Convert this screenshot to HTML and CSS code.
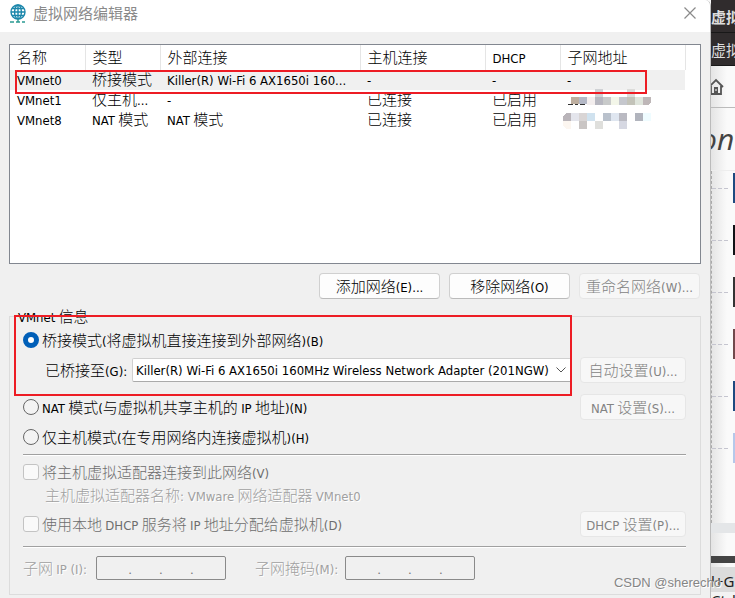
FILE: index.html
```html
<!DOCTYPE html>
<html lang="zh-CN">
<head>
    <meta charset="UTF-8">
    <meta name="viewport" content="width=device-width, initial-scale=1.0">
    <title>虚拟网络编辑器</title>
    <link rel="stylesheet" href="styles.css">
</head>
<body>

    <div class="desktop">
        <main class="dialog">
            <!-- Title bar -->
            <header class="titlebar">
                <svg class="app-icon" viewBox="0 0 18 19" width="18" height="19">
                    <g fill="none" stroke="#1b86ab" stroke-width="1.4">
                        <circle cx="9" cy="8" r="7"/>
                        <ellipse cx="9" cy="8" rx="3.4" ry="7"/>
                        <path d="M9 1v14M2 8h14M3.2 4.5h11.6M3.2 11.5h11.6"/>
                        <path d="M1 18h4M7 18h4M13 18h3" stroke="#2b9a92" stroke-width="1.6"/>
                        <path d="M9 15v3" stroke="#2b9a92"/>
                    </g>
                </svg>
                <h1>虚拟网络编辑器</h1>
                <button class="close" type="button" aria-label="关闭">
                    <svg viewBox="0 0 12 12" width="12" height="12"><path d="M0.5 0.5L11.5 11.5M11.5 0.5L0.5 11.5" stroke="#8a8a8a" stroke-width="1.2"/></svg>
                </button>
            </header>

            <div class="content">
                <!-- Network list -->
                <div class="list">
                    <table>
                        <colgroup>
                            <col class="c-name"><col class="c-type"><col class="c-ext"><col class="c-host"><col class="c-dhcp"><col class="c-addr"><col>
                        </colgroup>
                        <thead>
                            <tr><th>名称</th><th>类型</th><th>外部连接</th><th>主机连接</th><th><span class="lat">DHCP</span></th><th>子网地址</th><td></td></tr>
                        </thead>
                        <tbody>
                            <tr class="selected">
                                <td><span class="lat">VMnet0</span></td>
                                <td>桥接模式</td>
                                <td><span class="lat">Killer(R) Wi-Fi 6 AX1650i 160...</span></td>
                                <td><span class="lat">-</span></td>
                                <td><span class="lat">-</span></td>
                                <td><span class="lat">-</span></td>
                                <td></td>
                            </tr>
                            <tr>
                                <td><span class="lat">VMnet1</span></td>
                                <td>仅主机<span class="lat">...</span></td>
                                <td><span class="lat">-</span></td>
                                <td>已连接</td>
                                <td>已启用</td>
                                <td class="hidden-addr">
                                    <svg class="mosaic" viewBox="0 0 88 40" width="88" height="40" shape-rendering="crispEdges">
                                        <path fill="#333" d="M5 15h5v1H5zM12 15h3v1h-3zM17 15h5v1h-5z"/>
                                        <path fill="#d0d2d5" d="M32 0h8v8h-8z"/><path fill="#dcdcda" d="M64 0h8v8h-8z"/>
                                        <path fill="#bdae9f" d="M8 8h8v7H8z"/><path fill="#b4b8c6" d="M16 8h8v7h-8z"/>
                                        <path fill="#f3eeee" d="M24 8h8v8h-8z"/><path fill="#b7b7c0" d="M32 8h8v8h-8z"/>
                                        <path fill="#c8caca" d="M40 8h8v8h-8z"/><path fill="#f3f6e9" d="M48 8h8v8h-8z"/>
                                        <path fill="#c5c7cd" d="M56 8h8v8h-8z"/><path fill="#c3c3b9" d="M64 8h8v8h-8z"/>
                                        <path fill="#dfe5dc" d="M72 8h8v8h-8z"/><path fill="#beb7b8" d="M80 8h8v5l-3 3h-5z"/>
                                        <path fill="#b9b4b9" d="M0 27l3-3h5v8H0z"/><path fill="#e4e5ec" d="M8 24h8v8H8z"/>
                                        <path fill="#d9d5d5" d="M16 24h8v8h-8z"/><path fill="#d0e2ef" d="M24 24h8v8h-8z"/>
                                        <path fill="#b9c1cc" d="M40 24h8v8h-8z"/><path fill="#dfe6f0" d="M48 24h8v8h-8z"/>
                                        <path fill="#babac2" d="M56 24h8v8h-8z"/><path fill="#b1b4bd" d="M72 24h8v8h-8z"/>
                                        <path fill="#effcff" d="M80 24h8v8h-8z"/><path fill="#fcf6f0" d="M0 32h8v8H3l-3-3z"/>
                                        <path fill="#c9c5c4" d="M16 32h8v8h-8z"/><path fill="#dfdfdc" d="M32 32h8v8h-8z"/>
                                        <path fill="#d6d8e2" d="M56 32h8v8h-8z"/>
                                    </svg>
                                </td>
                                <td></td>
                            </tr>
                            <tr>
                                <td><span class="lat">VMnet8</span></td>
                                <td><span class="lat">NAT</span> 模式</td>
                                <td><span class="lat">NAT</span> 模式</td>
                                <td>已连接</td>
                                <td>已启用</td>
                                <td></td>
                                <td></td>
                            </tr>
                        </tbody>
                    </table>
                    <div class="mark mark-row"></div>
                </div>

                <div class="actions">
                    <button type="button" class="btn">添加网络<span class="lat">(E)...</span></button>
                    <button type="button" class="btn">移除网络<span class="lat">(O)</span></button>
                    <button type="button" class="btn" disabled>重命名网络<span class="lat">(W)...</span></button>
                </div>

                <!-- VMnet info -->
                <div class="info-wrap">
                    <fieldset class="info">
                        <legend><span class="lat">VMnet</span> 信息</legend>
                        <div class="row">
                            <input type="radio" name="mode" id="bridged" checked>
                            <label for="bridged">桥接模式<span class="lat">(</span>将虚拟机直接连接到外部网络<span class="lat">)(B)</span></label>
                        </div>
                        <div class="row">
                            <label for="adapter" class="adapter-label">已桥接至<span class="lat">(G):</span></label>
                            <div class="select-wrap">
                                <select id="adapter" class="lat">
                                    <option>Killer(R) Wi-Fi 6 AX1650i 160MHz Wireless Network Adapter (201NGW)</option>
                                </select>
                                <svg class="chevron" viewBox="0 0 10 6" width="10" height="6"><path d="M0.5 0.5L5 5L9.5 0.5" fill="none" stroke="#555"/></svg>
                            </div>
                            <button type="button" class="btn side" disabled>自动设置<span class="lat">(U)...</span></button>
                        </div>
                        <div class="row nat">
                            <input type="radio" name="mode" id="nat">
                            <label for="nat"><span class="lat">NAT</span> 模式<span class="lat">(</span>与虚拟机共享主机的 <span class="lat">IP</span> 地址<span class="lat">)(N)</span></label>
                            <button type="button" class="btn side" disabled><span class="lat">NAT</span> 设置<span class="lat">(S)...</span></button>
                        </div>
                        <div class="row">
                            <input type="radio" name="mode" id="hostonly">
                            <label for="hostonly">仅主机模式<span class="lat">(</span>在专用网络内连接虚拟机<span class="lat">)(H)</span></label>
                        </div>
                        <hr>
                        <div class="row off">
                            <input type="checkbox" id="hostadapter" disabled>
                            <label for="hostadapter">将主机虚拟适配器连接到此网络<span class="lat">(V)</span></label>
                        </div>
                        <p class="adapter-name">主机虚拟适配器名称<span class="lat">: VMware</span> 网络适配器 <span class="lat">VMnet0</span></p>
                        <div class="row off">
                            <input type="checkbox" id="dhcp" disabled>
                            <label for="dhcp">使用本地 <span class="lat">DHCP</span> 服务将 <span class="lat">IP</span> 地址分配给虚拟机<span class="lat">(D)</span></label>
                            <button type="button" class="btn side" disabled><span class="lat">DHCP</span> 设置<span class="lat">(P)...</span></button>
                        </div>
                        <hr class="second">
                        <div class="row ips">
                            <label for="ip1">子网 <span class="lat">IP (I):</span></label>
                            <div class="ip">
                                <input id="ip1" disabled>.<input aria-label="IP 2" disabled>.<input aria-label="IP 3" disabled>.<input aria-label="IP 4" disabled>
                            </div>
                            <label for="mask1" class="mask-label">子网掩码<span class="lat">(M):</span></label>
                            <div class="ip">
                                <input id="mask1" disabled>.<input aria-label="掩码 2" disabled>.<input aria-label="掩码 3" disabled>.<input aria-label="掩码 4" disabled>
                            </div>
                        </div>
                    </fieldset>
                    <div class="mark mark-bridge"></div>
                </div>
            </div>
        </main>

        <!-- Page behind the dialog -->
        <aside class="behind">
            <div class="tab strong">虚拟</div>
            <div class="tab">虚拟机</div>
            <div class="toolbar">
                <svg viewBox="0 0 16 17" width="16" height="17"><path d="M1 9L8 2l7 7M3 8v8h10V8" fill="none" stroke="#555" stroke-width="1.8"/><path d="M6 9h4v7H6z" fill="#555"/><path d="M7.500 11h1v2h-1z" fill="#fff"/></svg>
            </div>
            <div class="logo">on</div>
            <ul class="thumbs">
                <li class="t-blue"></li>
                <li class="t-black"></li>
                <li class="t-dark"></li>
                <li class="t-brown"></li>
                <li class="t-blue"></li>
                <li class="t-light"></li>
            </ul>
            <div class="band"></div>
            <div class="bar"></div>
            <div class="keys">l+G</div>
            <div class="keys next">Ctrl</div>
        </aside>

        <div class="watermark">CSDN @sherecho</div>
    </div>

</body>
</html>
```
FILE: styles.css
```css
* { box-sizing: border-box; }
body {
    margin: 0;
    font-family: "Noto Sans CJK SC", sans-serif;
    font-size: 15px;
    font-weight: 300;
    line-height: 20px;
    color: #000;
    background: #fafafa;
}
button, input, select { font: inherit; color: inherit; margin: 0; }
.lat { font-family: "DejaVu Sans Condensed", "Noto Sans", sans-serif; font-size: 13px; font-weight: 400; line-height: 1; }

.desktop { position: relative; display: flex; min-height: 100vh; overflow: hidden; }
.dialog { flex: 1; min-width: 0; background: #f0f0f0; border-right: 1px solid #bbb; border-top-right-radius: 6px; overflow: hidden; }

/* title bar */
.titlebar { display: flex; align-items: center; height: 32px; padding: 0 14px 6px 9px; background: #fff; }
.titlebar h1 { flex: 1; margin: 0 0 0 6px; font-size: 15px; font-weight: 400; color: #8a8a8a; }
.close { display: flex; padding: 0; border: 0; background: none; }

.content { padding: 12px 9px 2px; }

/* network list */
.list { position: relative; min-height: 220px; background: #fff; border: 1px solid #828790; }
table { width: 100%; table-layout: fixed; border-collapse: collapse; }
th, td { padding: 0 0 0 7px; text-align: left; font-weight: 300; white-space: nowrap; overflow: hidden; height: 20px; line-height: 18px; }
th { height: 25px; padding-bottom: 2px; border-right: 1px solid #e5e5e5; }
.c-name { width: 75px; }
.c-type { width: 75px; }
.c-ext { width: 200px; }
.c-host { width: 125px; }
.c-dhcp { width: 75px; }
.c-addr { width: 125px; }
tbody td { padding-bottom: 2px; }
.selected td { background: #f0f0f0; }
.selected td:last-child { background: #fff; }
.hidden-addr { position: relative; overflow: visible; }
.mosaic { position: absolute; left: 3px; top: -1px; }
.mark { position: absolute; border: 2px solid #ed1c24; pointer-events: none; }
.mark-row { left: 5px; right: 53px; top: 25px; height: 24px; }
.mark-bridge { left: 5px; right: 129px; top: 7px; height: 81px; }

/* buttons */
.actions { display: flex; justify-content: flex-end; gap: 9px; margin-top: 9px; padding-right: 1px; }
.btn { width: 121px; height: 26px; padding: 0; line-height: 20px; white-space: nowrap; background: #fdfdfd; border: 1px solid #d0d0d0; border-bottom-color: #bbb; border-radius: 4px; }
.btn:disabled { color: #838383; background: #f7f7f7; border-color: #e6e6e6; }
.side { width: 106px; margin-left: auto; }

/* vmnet info */
.info-wrap { position: relative; margin-top: 9px; }
.info { min-width: 0; margin: 0; padding: 1px 14px 11px 13px; border: 1px solid #dcdcdc; }
legend { margin-left: -5px; padding: 0; line-height: 16px; }
.row { display: flex; align-items: center; height: 30px; }
.row label { white-space: nowrap; }
.nat { margin-top: 7px; }
.row input[type="radio"], .row input[type="checkbox"] { appearance: none; flex: none; width: 16px; height: 16px; margin-right: 3px; border: 1px solid #666; border-radius: 50%; background: #f3f3f3; }
.row input[type="radio"]:checked { border: 5px solid #005fb8; background: #fff; }
.row input[type="checkbox"] { border-color: #c3c3c3; border-radius: 3px; background: #f9f9f9; }
.off { color: #6d6d6d; }
.adapter-label { width: 109px; padding-left: 22px; }
.select-wrap { position: relative; flex: 1; min-width: 0; margin-right: 8px; }
.select-wrap select { appearance: none; display: block; width: 100%; height: 24px; padding: 0 16px 0 3px; background: #fff; border: 1px solid #d0d0d0; border-bottom-color: #aaa; border-radius: 2px; }
.chevron { position: absolute; right: 6px; top: 9px; }
hr { height: 2px; margin: 2px 0 1px; border: 0; border-top: 1px solid #a0a0a0; background: #fff; }
.adapter-name { margin: 0 0 6px; padding-left: 22px; line-height: 16px; color: #a0a0a0; text-shadow: 1px 1px 0 #fff; }
.second { margin: 7px 0 5px; }
.ips { color: #a0a0a0; }
.ips label { width: 73px; text-shadow: 1px 1px 0 #fff; }
.ips .mask-label { width: 90px; margin-left: 29px; }
.ip { display: flex; align-items: center; width: 130px; height: 24px; padding: 0 4px; border: 1px solid #8a8a8a; border-radius: 2px; color: #777; }
.ip input { flex: 1; min-width: 0; width: 0; height: 20px; padding: 0; border: 0; background: none; }

/* page behind */
.behind { flex: none; width: 24px; overflow: hidden; background: linear-gradient(90deg, #e4e4e4, #fafafa 16px); }
.tab { height: 33px; padding-top: 7px; font-weight: 400; color: #ddd; background: #302c2d; border-bottom: 1px solid #181818; white-space: nowrap; }
.tab.strong { font-weight: 700; }
.toolbar { height: 42px; padding-top: 12px; border-bottom: 1px solid #bbb; }
.toolbar svg { display: block; margin-left: -3px; }
.logo { height: 63px; padding-top: 20px; font: italic 30px/22px "Open Sans", sans-serif; color: #444; text-indent: -11px; white-space: nowrap; border-bottom: 1px solid #eee; }
.thumbs { margin: 0; padding: 2px 0 0; height: 352px; list-style: none; border-left: 1px dashed #aaa; }
.thumbs li { height: 30px; margin-bottom: 22px; border-right: 2px solid #123; background: repeating-linear-gradient(90deg, #c5c5cf 0 4px, transparent 4px 6px) 0 15px / 16px 1px no-repeat; }
.thumbs .t-blue { border-color: #1d4a80; }
.thumbs .t-black { border-color: #101216; }
.thumbs .t-dark { border-color: #333; }
.thumbs .t-brown { border-color: #71494c; }
.thumbs .t-light { border-color: #b5c8ea; }
.band { height: 10px; background: #e4e6e8; }
.bar { height: 7px; margin: 23px 0 4px; background: #444; }
.keys { height: 25px; font: 15px/28px "Noto Sans", sans-serif; color: #222; background: #dcdcdc; white-space: nowrap; }
.next { height: 6px; line-height: 16px; background: #f3f3f3; overflow: hidden; }

.watermark { position: absolute; right: 14px; bottom: 5px; font: 13px/20px "Liberation Sans", sans-serif; color: #858585; text-shadow: 1px 1px 0 #fff; }
```
